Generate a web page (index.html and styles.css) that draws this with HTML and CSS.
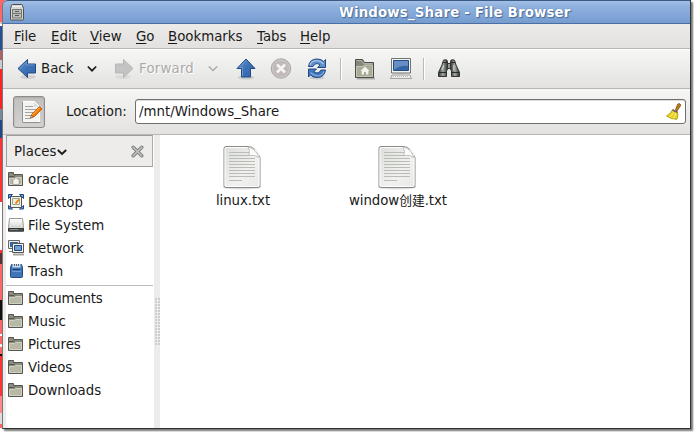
FILE: index.html
```html
<!DOCTYPE html>
<html lang="en">
<head>
<meta charset="utf-8">
<title>Windows_Share - File Browser</title>
<link rel="stylesheet" href="styles.css">
</head>
<body>
<svg width="0" height="0" class="defs">
  <defs>
    <linearGradient id="blue" x1="0" y1="0" x2="1" y2="1"><stop offset="0" stop-color="#6f9bd0"/><stop offset=".5" stop-color="#3b71b6"/><stop offset="1" stop-color="#3465a4"/></linearGradient>
    <linearGradient id="paper" x1="0" y1="0" x2="1" y2="1"><stop offset="0" stop-color="#dcdeda"/><stop offset=".6" stop-color="#f1f2f0"/><stop offset="1" stop-color="#e8e9e7"/></linearGradient>
    <linearGradient id="metal" x1="0" y1="0" x2="1" y2="0"><stop offset="0" stop-color="#343834"/><stop offset=".5" stop-color="#a4a8a2"/><stop offset="1" stop-color="#2e3436"/></linearGradient>
    <linearGradient id="disk" x1="0" y1="0" x2="0" y2="1"><stop offset="0" stop-color="#fff"/><stop offset="1" stop-color="#c8cac6"/></linearGradient>
    <symbol id="folder" viewBox="0 0 16 16">
      <path d="M.5 14.500V1.500h5v2h9v11z" fill="#8a8c7c" stroke="#555753"/>
      <path d="M1 5.500h5l1-1" fill="none" stroke="#555753"/>
      <path d="M1.500 13.500v-6h5l1-1h6v7z" fill="#b7b9a5" stroke="#d0d1c4"/>
    </symbol>
    <symbol id="home" viewBox="0 0 16 16">
      <use href="#folder"/>
      <path d="M8 6.500L3.800 10.500H5v3h6v-3h1.200z" fill="#f2f3ed" stroke="#8c8e7e" stroke-width=".6"/>
    </symbol>
    <symbol id="file" viewBox="0 0 40 46">
      <ellipse cx="20" cy="42" rx="19.500" ry="2.500" fill="#000" opacity=".13"/>
      <path d="M4 1.500H26q4 0 7 3t5 8v28q0 2-2 2H4q-2 0-2-2v-37q0-2 2-2z" fill="url(#paper)" stroke="#888a85"/>
      <path d="M4.500 2.500H26q11 2 11 10v27.500q0 1.500-1.500 1.500h-31q-1.500 0-1.500-1.500v-36q0-1.500 1.500-1.500z" fill="none" stroke="#fff"/>
      <path d="M7 7.500h20M7 10.500h21M7 13.500h26M7 16.500h26M7 19.500h26M7 22.500h26M7 25.500h26M7 28.500h26M7 31.500h26M7 35.500h13" stroke="#babdb6"/>
      <path d="M27 10.500q6-1 10 2Q33 3 26 2q2.500 4 1 8.500z" fill="#fcfcfc" stroke="#b5b7b2" stroke-width=".8"/>
    </symbol>
  </defs>
</svg>
<div class="screen">
  <div class="backdrop"></div>
  <main class="window">
    <header class="titlebar">
      <svg class="cabinet" width="14" height="17" viewBox="0 0 14 17"><path d="M2.500.500h9q1 0 1 1l1 3v10.500q0 1-1 1h-11q-1 0-1-1V4.500l1-3q0-1 1-1z" fill="#d5d7d2" stroke="#4d504c"/><path d="M2 2.500h10" stroke="#f1f2ef"/><path d="M2.500 5.500h9v4h-9zM2.500 9.500h9v4.500h-9z" fill="#bbbeb8" stroke="#747771"/><path d="M5 7.500h4M5 11.500h4" stroke="#555852"/></svg>
      <h1>Windows_Share - File Browser</h1>
    </header>
    <nav class="menubar">
      <span class="m1"><u>F</u>ile</span><span class="m2"><u>E</u>dit</span><span class="m3"><u>V</u>iew</span><span class="m4"><u>G</u>o</span><span class="m5"><u>B</u>ookmarks</span><span class="m6"><u>T</u>abs</span><span class="m7"><u>H</u>elp</span>
    </nav>
    <div class="toolbar">
      <div class="tool back">
        <svg width="20" height="22" viewBox="0 0 20 22"><ellipse cx="11" cy="19" rx="8" ry="2" fill="#000" opacity=".1"/><path d="M1 10.500L10.500 1.500v4.500h8v9h-8v4.500z" fill="url(#blue)" stroke="#204a87"/><path d="M2.500 10.500l7-6.500v3h8" fill="none" stroke="#6d97cc"/></svg>
        <span class="lbl">Back</span>
        <svg class="chev" width="10" height="8" viewBox="0 0 10 8"><path d="M.8 1.500L5 5.700 9.200 1.500" fill="none" stroke="#1a1a1a" stroke-width="1.700"/></svg>
      </div>
      <div class="tool forward">
        <svg width="20" height="22" viewBox="0 0 20 22"><ellipse cx="9" cy="19" rx="8" ry="2" fill="#000" opacity=".06"/><path d="M19 10.500L9.500 1.500v4.500h-8v9h8v4.500z" fill="#c2c3c2" stroke="#b5b7b5"/></svg>
        <span class="lbl">Forward</span>
        <svg class="chev" width="10" height="8" viewBox="0 0 10 8"><path d="M.8 2.500L5 6.700 9.200 2.500" fill="none" stroke="#fff" stroke-width="1.200"/><path d="M.8 1.500L5 5.700 9.200 1.500" fill="none" stroke="#aaa9a7" stroke-width="1.600"/></svg>
      </div>
      <svg class="up" width="20" height="22" viewBox="0 0 20 22"><ellipse cx="10" cy="19.500" rx="8" ry="2" fill="#000" opacity=".12"/><path d="M10 1L1 10.500h4.500v8.500h9v-8.500H19z" fill="url(#blue)" stroke="#204a87"/><path d="M10 2.500L3.500 9.500h3v8.500" fill="none" stroke="#6d97cc"/></svg>
      <svg class="stop" width="22" height="22" viewBox="0 0 22 22"><circle cx="11" cy="10.500" r="9.700" fill="#c0b9b9" stroke="#a9a4a4"/><circle cx="11" cy="10.500" r="8.500" fill="none" stroke="#d0cbcb"/><path d="M7 6.500l8 8m0-8l-8 8" stroke="#f5f3f3" stroke-width="2.800"/></svg>
      <svg class="reload" width="20" height="22" viewBox="0 0 20 22"><ellipse cx="10" cy="20" rx="8" ry="1.500" fill="#000" opacity=".12"/><path d="M1.500 8.500Q2.500 1 10 1q4.500 0 6.500 2.500L18.500 1.500v8h-8l2.500-2.500Q9 3.500 6 8.500z" fill="#5f8fca" stroke="#204a87"/><path d="M3 7.300Q4.500 2.700 9.500 2.700q4 0 7 3.300" fill="none" stroke="#a5c2e5" stroke-width="1.200"/><path d="M18.500 12Q17.500 19.500 10 19.500q-4.500 0-6.500-2.500L1.500 19v-8h8L7 13.500q4 3.500 7-1.500z" fill="#4177bb" stroke="#204a87"/><path d="M17 13.200Q15.500 17.800 10.500 17.800q-4 0-7-3.300" fill="none" stroke="#7ea6d8" stroke-width="1.200"/></svg>
      <i class="sep s1"></i>
      <svg class="homebtn" width="20" height="22" viewBox="0 0 20 22"><path d="M2 20.500h18" stroke="#000" opacity=".25" stroke-width="2"/><path d="M.5 19.500V1.500h7l2 3h9v15z" fill="#85877a" stroke="#4b4d45"/><path d="M1.500 2.500h5l2 3h9" fill="none" stroke="#b1b3a4"/><path d="M1.500 18.500v-10h6l2-1.500h8v11.500z" fill="#a9ab99" stroke="#c5c7b8"/><path d="M10 8.500L5.500 13h1.200v3.500h2.300v-2.500h2v2.500h2.300v-3.500h1.200z" fill="#f4f4ec"/></svg>
      <svg class="computer" width="22" height="22" viewBox="0 0 22 22"><path d="M1.500.500h19v14.500h-19z" fill="#f4f4f2" stroke="#70736e"/><path d="M3.500 2.500h15v10h-15z" fill="#3465a4" stroke="#234c87"/><path d="M4 3h14v5Q10 7 4 12z" fill="#688fc4"/><path d="M7 15.500h8" stroke="#a3a5a0"/><path d="M2 17h18l1.500 3.500h-21z" fill="#eceeea" stroke="#a0a39d"/><path d="M3 18.500h16" stroke="#babdb6" stroke-dasharray="1 1"/></svg>
      <i class="sep s2"></i>
      <svg class="find" width="22" height="20" viewBox="0 0 22 20"><path d="M5 2.500q0-1.800 2.300-1.800T9.500 2.500V10l-1 2v5.500h-8v-4L4 6z" fill="url(#metal)" stroke="#2e3432"/><path d="M17 2.500q0-1.800-2.300-1.800T12.500 2.500V10l1 2v5.500h8v-4L18 6z" fill="url(#metal)" stroke="#2e3432"/><path d="M9.500 4.500h3v5h-3z" fill="#969b94" stroke="#333"/><path d="M1 13.500h7.500m5 0H21M5 3.500h4m4 0h4" stroke="#272b29"/><path d="M3.800 11l2-4.500m10 5V6" stroke="#c9ccc6" stroke-width="1.300"/></svg>
    </div>
    <div class="location">
      <button class="edit" aria-label="Edit location"><svg width="22" height="22" viewBox="0 0 22 22"><path d="M1.500.500h12l5 5v15.500h-17z" fill="#f3f3f1" stroke="#fff"/><path d="M1.500 21V.500M1.500 21.500h18" stroke="#8f918d" fill="none"/><path d="M4 5.500h8M4 8.500h11M4 11.500h9M4 14.500h6M4 17.500h5" stroke="#a0a39e"/><path d="M13 1l5 5h-5z" fill="#dcdedb"/><path d="M9.500 17l1.500-4 7.500-7.500 2.500 2.500-7.500 7.500z" fill="#f57900" stroke="#c04f00" stroke-width=".8"/><path d="M11.500 14l7-7" stroke="#fcbf5c"/><path d="M9.300 17.200l1.200-3 1.800 1.800z" fill="#fce9b8" stroke="#333" stroke-width=".5"/></svg></button>
      <label>Location:</label>
      <div class="entry"><span>/mnt/Windows_Share</span>
        <svg width="15" height="17" viewBox="0 0 15 17"><path d="M9.500 7l2-5.500q1-1.500 2.500-.5t0 2.500L11 8z" fill="#c17d11" stroke="#754b0b" stroke-width=".8"/><path d="M6.500 6.500l5 2.500q1 4-.5 7.300Q5 16.500.5 13 5 10.500 6.500 6.500z" fill="#e6d022" stroke="#a89508" stroke-width=".8"/><path d="M6.500 7l5 2.200" stroke="#75507b" stroke-width="1.500"/><path d="M7.500 9.500Q6 13 3.500 13.500M9.500 10q0 3.500-2 5.500" fill="none" stroke="#fcf080"/></svg>
      </div>
    </div>
    <div class="body">
      <aside>
        <div class="places"><span>Places</span><svg class="chev" width="10" height="7" viewBox="0 0 10 7"><path d="M.8 1L5 5 9.200 1" fill="none" stroke="#1a1a1a" stroke-width="1.900"/></svg>
          <svg class="close" width="13" height="13" viewBox="0 0 13 13"><path d="M2.200 2.200l8.600 8.600m0-8.600l-8.600 8.600" stroke="#7c7f7a" stroke-width="3.400" stroke-linecap="round"/><path d="M2.200 2.200l8.600 8.600m0-8.600l-8.600 8.600" stroke="#c0c2bd" stroke-width="1.600" stroke-linecap="round"/></svg></div>
        <ul>
          <li><svg><use href="#home"/></svg>oracle</li>
          <li><svg viewBox="0 0 16 16"><path d="M2.500 2.500h11v11h-11z" fill="#f1f1ea" stroke="#555753"/><path d="M4.500 4.500h7v6h-7z" fill="#eef0d8" stroke="#a0a394"/><path d="M7.500 9.500l3.500-4" stroke="#f57900" stroke-width="1.800"/><path d="M.5 4.500v-4h4zM11.500.500h4v4zM.5 11.500v3.500h4zM15.500 11.500v3.500h-4z" fill="#729fcf" stroke="#204a87"/></svg>Desktop</li>
          <li><svg viewBox="0 0 16 16"><path d="M1.500 1.500h13l1 9v4H.5v-4z" fill="url(#disk)" stroke="#999b97"/><path d="M4 8q4 3 8 0l1 2H3z" fill="#cfd1cd"/><path d="M.5 11.500h15v2.500H.5z" fill="#555753" stroke="#2e3436"/><path d="M2 12.500h8" stroke="#888a85"/></svg>File System</li>
          <li><svg viewBox="0 0 16 16"><path d="M.5.500h11v8H.5z" fill="#eee" stroke="#666864"/><path d="M2 2h8v5H2z" fill="#3465a4"/><path d="M1 11.500h5" stroke="#888a85"/><path d="M4.500 3.500h11v9h-11z" fill="#f4f4f4" stroke="#555753"/><path d="M6.500 5.500h7v5h-7z" fill="#729fcf" stroke="#204a87"/><path d="M5 14.500h11" stroke="#a4a6a2" stroke-width="2"/></svg>Network</li>
          <li><svg viewBox="0 0 16 16"><path d="M3.500 1.500h10l1 3v9q0 1-1 1h-10q-1 0-1-1v-9z" fill="#3f74b7" stroke="#204a87"/><path d="M4.500 1h8v3.500h-8z" fill="#cfdae8"/><path d="M6.500 1v2m2-2v2m2-2v2" stroke="#47617e"/><path d="M5 6.500h7" stroke="#183b70"/><path d="M4 8.500h9" stroke="#6e9bd1"/></svg>Trash</li>
        </ul>
        <ul class="bookmarks">
          <li><svg><use href="#folder"/></svg><span class="tight">Documents</span></li>
          <li><svg><use href="#folder"/></svg>Music</li>
          <li><svg><use href="#folder"/></svg>Pictures</li>
          <li><svg><use href="#folder"/></svg>Videos</li>
          <li><svg><use href="#folder"/></svg>Downloads</li>
        </ul>
      </aside>
      <div class="handle"><i></i></div>
      <section class="files">
        <figure><svg width="40" height="46"><use href="#file"/></svg><figcaption>linux.txt</figcaption></figure>
        <figure><svg width="40" height="46"><use href="#file"/></svg><figcaption>window<span class="cjk">创建</span>.txt</figcaption></figure>
      </section>
    </div>
  </main>
</div>
</body>
</html>
```
FILE: styles.css
```css
* { box-sizing: border-box; }
body { margin: 0; width: 694px; height: 432px; overflow: hidden; background: #fff; font: 13.33px/16px "DejaVu Sans", "Noto Sans CJK SC", sans-serif; color: #1a1a1a; }
svg { display: block; flex: none; }
.defs { position: absolute; }
.screen { display: flex; width: 694px; height: 432px; background: linear-gradient(90deg, #f66 0 6px, #fff 6px) 0 0/100% 10px no-repeat; }
.backdrop { width: 2px; height: 428px; flex: none; background: linear-gradient(#f66 0 22px, #c8c8c8 22px 24px, #fff 24px 26px, #245096 26px 50px, #a66 50px 60px, #ccc 60px 69px, #f22 69px 109px, #789 109px 120px, #204a87 120px 138px, #f33 138px 202px, #fff 202px 250px, #f33 250px 253px, #533 253px 264px, #f66 264px 300px, #111 300px 320px, #f66 320px 334px, #fff 334px 336px, #f66 336px 344px, #eee 344px 347px, #f66 347px 354px, #111 354px 356px, #f33 356px 396px, #f88 396px 413px, #ddd 413px 424px, #f66 424px); }
.window { width: 689px; height: 429px; flex: none; display: flex; flex-direction: column; background: #edecea; border-left: 1px solid #777; border-right: 1px solid #333; border-bottom: 1px solid #333; border-top-left-radius: 5px; box-shadow: 2px 2px 2px #777; }
.titlebar { height: 24px; flex: none; display: flex; align-items: flex-start; border-top: 1px solid #3c5a86; border-bottom: 1px solid #4a6fa5; background: linear-gradient(#a3bfe5, #8fb1de 25%, #86abdb 50%, #769ccf); border-top-left-radius: 5px; }
.cabinet { margin: 3px 0 0 7px; }
h1 { margin: 4px 0 0 315px; font: bold 13.33px/16px "DejaVu Sans", sans-serif; letter-spacing: .18px; color: #fff; text-shadow: 1px 1px 1px #46689a, 0 0 1px #46689a; white-space: nowrap; }
.menubar { height: 25px; flex: none; display: flex; padding: 5px 0 0 11px; background: linear-gradient(#ecebea, #e2e1df); border-bottom: 1px solid #b8b7b5; }
.menubar u { text-underline-offset: 2px; text-decoration-thickness: 1px; }
.m1 { width: 37px; } .m2 { width: 39px; } .m3 { width: 46px; } .m4 { width: 32px; } .m5 { width: 89px; } .m6 { width: 43px; }
.toolbar { height: 40px; flex: none; display: flex; align-items: flex-start; padding: 9px 0 0 14px; background: linear-gradient(#f6f6f5, #e3e2e0); border-top: 1px solid #fff; border-bottom: 1px solid #b8b7b5; }
.tool { display: flex; }
.lbl { margin: 2px 0 0 4px; }
.back { width: 97px; } .forward { width: 122px; color: #acaba9; text-shadow: 1px 1px #fff; }
.back .lbl { width: 46px; } .forward .lbl { margin-left: 5px; width: 69px; letter-spacing: .2px; }
.tool > svg:first-child { margin-top: -1px; }
.tool .chev { margin-top: 6px; }
.up { margin-top: -1px; }
.stop { margin: -1px 0 0 14px; } .reload { margin: -1px 0 0 15px; }
.sep { width: 2px; height: 22px; margin-top: -1px; background: linear-gradient(90deg, #bbb9b7 50%, #fff 50%); }
.s1 { margin-left: 13px; } .homebtn { margin: -1px 0 0 13px; } .computer { margin: -1px 0 0 15px; } .s2 { margin-left: 11px; } .find { margin: 0 0 0 13px; }
.location { height: 46px; flex: none; display: flex; padding: 7px 4px 0 10px; background: linear-gradient(#f6f6f5, #e3e2e0); border-bottom: 1px solid #b8b7b5; }
.edit { width: 32px; height: 32px; padding: 0 0 1px 7px; border: 1px solid #8d8b89; border-radius: 3px; background: linear-gradient(#c2c0be, #d4d2d0); box-shadow: inset 0 1px 2px #aaa; }
label { margin: 8px 0 0 21px; width: 69px; }
.entry { flex: 1; height: 25px; margin-top: 3px; border: 1px solid #706f6d; border-radius: 3px; background: #fff; display: flex; justify-content: space-between; padding: 3px 4px 0 3px; box-shadow: inset 0 1px #ddd; }
.entry span { margin-top: 1px; }
.body { flex: 1; display: flex; padding-left: 3px; }
aside { width: 148px; background: #fff; }
.places { width: 147px; height: 32px; display: flex; background: #edecea; border: 1px solid #9f9d9b; border-right-color: #aaa; padding: 8px 0 0 7px; }
.places .chev { margin: 5px 0 0 1px; } .close { margin: 1px 0 0 64px; }
ul { list-style: none; margin: 0; padding: 1px 0 0 2px; }
li { height: 23px; display: flex; align-items: center; gap: 4px; }
li svg { width: 16px; height: 16px; margin-top: -1px; }
.tight { letter-spacing: -.15px; }
.bookmarks { width: 147px; margin-top: 2px; padding-top: 1px; border-top: 1px solid #bbb; }
.handle { width: 6px; background: #edecea; display: flex; align-items: flex-start; padding: 163px 0 0 1px; }
.handle i { width: 5px; height: 48px; background: radial-gradient(circle at 1px 1px, #aaa 0 .6px, transparent .8px) 0 0/3px 3px; }
.files { flex: 1; display: flex; background: #fff; padding: 10px 0 0 4px; }
figure { width: 155px; margin: 0; display: flex; flex-direction: column; align-items: center; }
figcaption { margin: 2px 0 0 3px; letter-spacing: -.06px; white-space: nowrap; }
.cjk { font-size: 12.8px; }
```
